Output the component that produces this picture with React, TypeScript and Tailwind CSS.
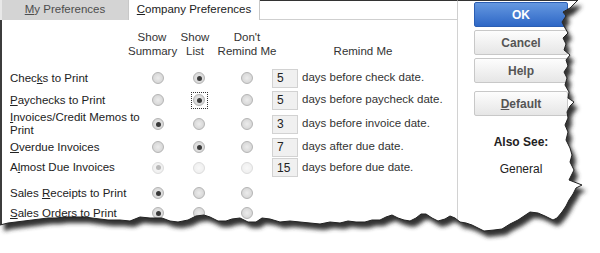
import React from 'react';

type RowDef = {
  label: React.ReactNode;
  h: string;
  checked: number;
  days?: string;
  text?: string;
  disabled?: boolean;
  focus?: number;
};

const rows: RowDef[] = [
  { label: <>Chec<span className="underline">k</span>s to Print</>, h: 'h-[22px]', checked: 1, days: '5', text: 'days before check date.' },
  { label: <><span className="underline">P</span>aychecks to Print</>, h: 'h-[22px]', checked: 1, days: '5', text: 'days before paycheck date.', focus: 1 },
  { label: <><span className="underline">I</span>nvoices/Credit Memos to Print</>, h: 'h-[26px]', checked: 0, days: '3', text: 'days before invoice date.' },
  { label: <><span className="underline">O</span>verdue Invoices</>, h: 'h-[20px]', checked: 1, days: '7', text: 'days after due date.' },
  { label: <>A<span className="underline">l</span>most Due Invoices</>, h: 'h-[21px]', checked: 0, days: '15', text: 'days before due date.', disabled: true },
  { label: <>Sales <span className="underline">R</span>eceipts to Print</>, h: 'h-[22px] mt-[4px]', checked: 0 },
  { label: <><span className="underline">S</span>ales Orders to Print</>, h: 'h-[18px]', checked: 0 },
];

// torn paper edge, top right going down and round to the left
const edge: [number, number][] = [
  [578, 0], [574, 4], [570, 8], [563, 12], [566, 16], [562, 22], [565, 28], [568, 33], [563, 38], [566, 44],
  [564, 50], [570, 55], [566, 60], [568, 66], [564, 72], [567, 78], [565, 85], [569, 92], [568, 98], [574, 102],
  [570, 106], [567, 112], [568, 118], [565, 125], [568, 132], [566, 140], [570, 148], [572, 155], [570, 162],
  [574, 170], [571, 176], [569, 180], [582, 185], [576, 188], [573, 194], [569, 200], [566, 206], [562, 212],
  [557, 218], [553, 220], [545, 216], [538, 213], [530, 212], [524, 216], [518, 220], [510, 224], [502, 229],
  [494, 230], [484, 231], [478, 228], [472, 225], [466, 223], [460, 222], [455, 218], [450, 216], [445, 219],
  [438, 221], [432, 218], [426, 214], [421, 214], [416, 218], [410, 221], [404, 220], [398, 218], [392, 215],
  [386, 217], [380, 220], [372, 220], [365, 222], [356, 222], [348, 221], [340, 223], [330, 222], [320, 224],
  [310, 223], [300, 222], [290, 221], [280, 222], [270, 219], [262, 218], [256, 222], [248, 222], [240, 218],
  [232, 219], [226, 221], [218, 221], [210, 217], [204, 215], [196, 216], [188, 220], [178, 222], [170, 221],
  [162, 218], [150, 218], [140, 217], [130, 221], [120, 220], [108, 220], [100, 219], [92, 218], [85, 217],
  [78, 217], [72, 217], [64, 217], [56, 218], [48, 218], [40, 219], [32, 220], [24, 221], [16, 222], [8, 223], [0, 225],
];

const edgeD = edge.map(([x, y], i) => `${i ? 'L' : 'M'}${x},${y}`).join(' ');
const paperD = `M0,0 ${edgeD.replace('M', 'L')} Z`;
const outsideD = `${edgeD} L0,253 L600,253 L600,0 Z`;

const Radio = ({ on, disabled, focus }: { on: boolean; disabled?: boolean; focus?: boolean }) => (
  <div className={`flex items-center justify-center w-[17px] h-[17px] ${focus ? 'outline-1 outline-dotted outline-[#333] -outline-offset-1' : ''}`}>
    <div
      className={`w-[12px] h-[12px] rounded-full border flex items-center justify-center ${
        disabled
          ? 'border-[#dcdcdc] bg-radial from-[#f8f8f8] to-[#ececec]'
          : 'border-[#b4b4b4] bg-radial from-[#ececec] to-[#cfcfcf]'
      }`}
    >
      {on && <div className={`w-[5px] h-[5px] rounded-full ${disabled ? 'bg-[#b8b8b8]' : 'bg-[#3a3a3a]'}`} />}
    </div>
  </div>
);

const Button = ({ children, primary, className = '' }: { children: React.ReactNode; primary?: boolean; className?: string }) => (
  <div
    className={`w-[94px] h-[25px] flex items-center justify-center rounded-[2px] border text-[12px] font-bold ${
      primary
        ? 'bg-linear-to-b from-[#6598e0] to-[#2e67c6] border-[#2b5eb3] text-white'
        : 'bg-linear-to-b from-[#fdfdfd] to-[#e6e6e6] border-[#c8c8c8] text-[#555]'
    } ${className}`}
  >
    {children}
  </div>
);

export default function App() {
  return (
    <div className="relative w-[600px] h-[253px] overflow-hidden bg-white text-[#222] text-[11.5px] font-['Liberation_Sans',Arial,sans-serif]">
      <div className="flex h-full">
        {/* Preferences panel */}
        <div className="w-[458px] flex flex-col">
          <div className="flex h-[20px] shrink-0">
            <div className="w-[2px] bg-[#e8e8e8]" />
            <div className="w-[126px] bg-[#d4d4d4] text-[#4d4d4d] flex items-center justify-center">
              <span><span className="underline">M</span>y Preferences</span>
            </div>
            <div className="w-[132px] border-x border-[#c8c8c8] bg-white flex items-center justify-center">
              <span><span className="underline">C</span>ompany Preferences</span>
            </div>
            <div className="flex-1 border-t border-[#333] border-b border-b-[#cfcfcf] border-r border-r-[#cfcfcf]" />
          </div>

          <div className="flex-1 border-l-2 border-[#3c3c3c] border-r border-r-[#d2d2d2]">
            <div className="flex pl-[8px] pt-[10px] leading-[14px] text-[#333] text-center">
              <div className="w-[118px]" />
              <div className="w-[48px]">Show<br />Summary</div>
              <div className="w-[38px]">Show<br />List</div>
              <div className="w-[66px]">Don't<br />Remind Me</div>
              <div className="w-[166px] flex items-end justify-center">Remind Me</div>
            </div>

            <div className="mt-[9px] flex flex-col">
              {rows.map((r, i) => (
                <div key={i} className={`grid grid-cols-[130px_36px_46px_50px_26px_1fr] items-center pl-[8px] ${r.h}`}>
                  <div className="leading-[13px]">{r.label}</div>
                  {[0, 1, 2].map((c) => (
                    <div key={c} className="flex justify-center">
                      <Radio on={r.checked === c} disabled={r.disabled} focus={r.focus === c} />
                    </div>
                  ))}
                  <div>
                    {r.days && (
                      <div className="w-[26px] h-[19px] bg-[#f0f0f0] border border-[#d2d2d2] flex items-center pl-[4px] text-[12px] text-[#222]">
                        {r.days}
                      </div>
                    )}
                  </div>
                  <div className="pl-[4px] text-[#333]">{r.text}</div>
                </div>
              ))}
            </div>
          </div>
        </div>

        {/* Buttons */}
        <div className="flex-1 border-t border-[#333] pl-[16px] pt-[1px] flex flex-col">
          <div className="flex flex-col gap-[3px]">
            <Button primary>OK</Button>
            <Button>Cancel</Button>
            <Button>Help</Button>
            <Button className="mt-[5px]">
              <span><span className="underline">D</span>efault</span>
            </Button>
          </div>
          <div className="w-[94px] text-center font-bold text-[12px] mt-[17px]">Also See:</div>
          <div className="w-[94px] text-center text-[12px] mt-[9px]">General</div>
        </div>
      </div>

      {/* torn edge overlay */}
      <svg className="absolute inset-0 pointer-events-none" width="600" height="253" viewBox="0 0 600 253">
        <defs>
          <filter id="tearBlur" x="-10%" y="-10%" width="120%" height="120%">
            <feGaussianBlur stdDeviation="2" />
          </filter>
          <clipPath id="outside">
            <path d={outsideD} />
          </clipPath>
        </defs>
        <path d={outsideD} fill="#fff" />
        <g clipPath="url(#outside)">
          <path d={paperD} transform="translate(4,6)" fill="#333" filter="url(#tearBlur)" />
        </g>
        <path d={edgeD} fill="none" stroke="#222" strokeWidth="1" />
      </svg>
    </div>
  );
}
